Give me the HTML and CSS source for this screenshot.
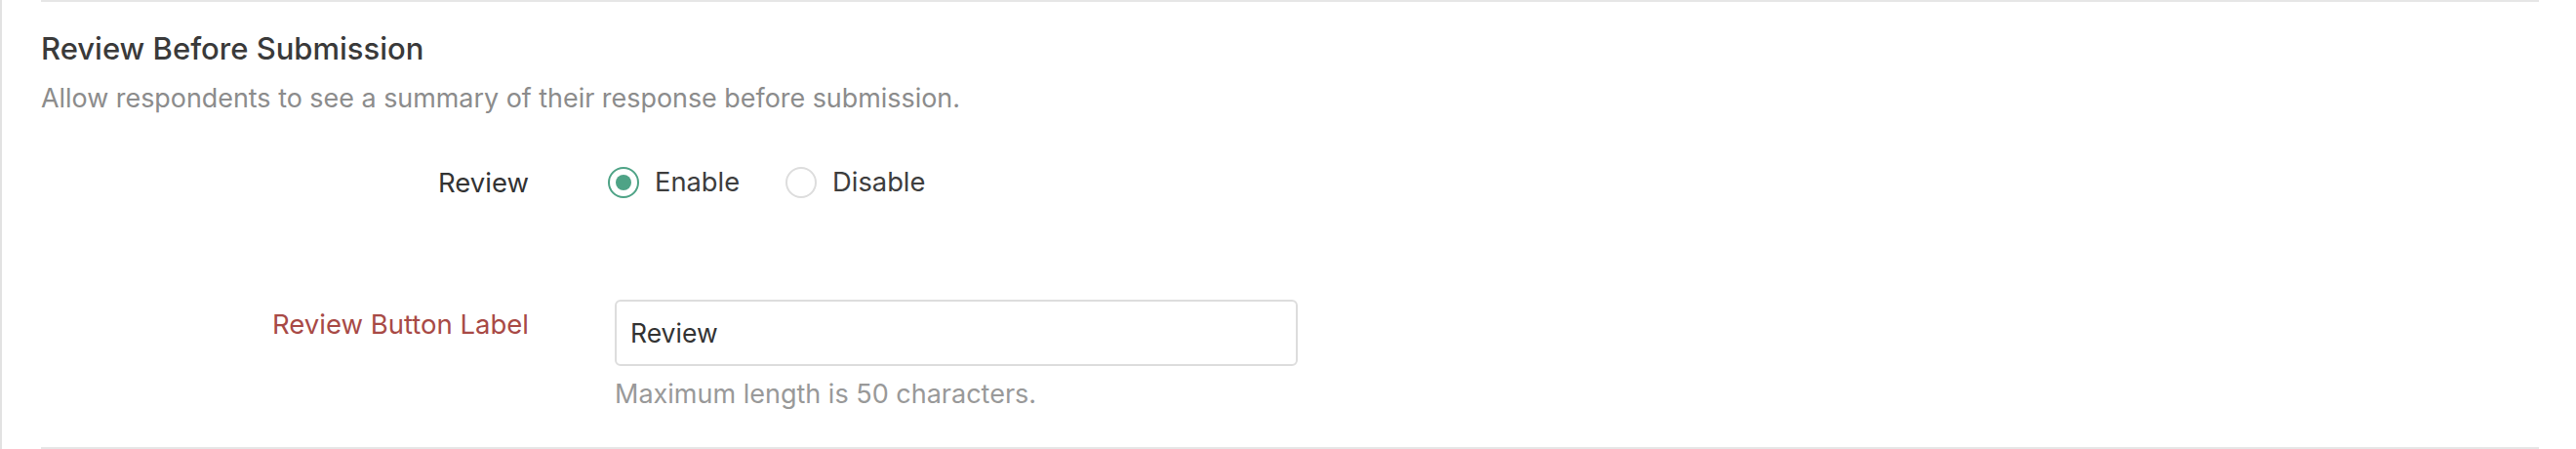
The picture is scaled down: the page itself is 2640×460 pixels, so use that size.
FILE: index.html
```html
<!DOCTYPE html>
<html lang="en">
<head>
<meta charset="utf-8">
<title>Review Before Submission</title>
<link rel="stylesheet" href="styles.css">
</head>
<body>
<div class="page">
  <section class="section">
    <h2 class="title">Review Before Submission</h2>
    <p class="desc">Allow respondents to see a summary of their response before submission.</p>
    <div class="form">
      <div class="row row-radio">
        <div class="label">Review</div>
        <div class="control">
          <div class="radios">
            <label class="radio"><span class="dot checked"></span><span class="rtext">Enable</span></label>
            <label class="radio"><span class="dot"></span><span class="rtext">Disable</span></label>
          </div>
        </div>
      </div>
      <div class="row row-input">
        <div class="label label-req">Review Button Label</div>
        <div class="control">
          <div class="input">Review</div>
          <div class="hint">Maximum length is 50 characters.</div>
        </div>
      </div>
    </div>
  </section>
</div>
</body>
</html>
```

FILE: styles.css
```css
html, body {
  margin: 0;
  padding: 0;
  background: #ffffff;
}
body {
  font-family: Inter, "Noto Sans", "Liberation Sans", sans-serif;
  color: #333333;
}
.page {
  height: 460px;
  border-left: 2px solid #e2e2e2;
  box-sizing: border-box;
  padding-left: 40px;
  padding-right: 38px;
}
.section {
  height: 460px;
  box-sizing: border-box;
  border-top: 2px solid #e6e6e6;
  border-bottom: 2px solid #e6e6e6;
  padding-top: 29px;
}
.title {
  margin: 0;
  font-size: 31px;
  line-height: 38px;
  font-weight: 500;
  color: #3a3a3a;
}
.desc {
  margin: 14px 0 0 0;
  font-size: 26.9px;
  line-height: 34px;
  color: #8c8c8c;
}
.form {
  margin-top: 54px;
  display: flex;
  flex-direction: column;
  gap: 104px;
}
.row {
  display: grid;
  grid-template-columns: 500px 700px;
  column-gap: 88px;
}
.label {
  text-align: right;
  font-size: 27.5px;
  line-height: 32px;
  color: #333333;
}
.label-req {
  color: #a84a46;
  padding-top: 9px;
}
.radios {
  display: flex;
  align-items: center;
  gap: 47px;
  margin-left: -7px;
}
.radio {
  display: flex;
  align-items: center;
  gap: 16px;
  font-size: 27.3px;
  line-height: 32px;
  color: #3d3d3d;
}
.dot {
  width: 32px;
  height: 32px;
  box-sizing: border-box;
  border: 2px solid #dddddd;
  border-radius: 50%;
  display: flex;
  align-items: center;
  justify-content: center;
}
.dot.checked {
  border-color: #4ea386;
}
.dot.checked::after {
  content: "";
  width: 16px;
  height: 16px;
  border-radius: 50%;
  background: #4ea386;
}
.input {
  height: 68px;
  box-sizing: border-box;
  border: 2px solid #dddddd;
  border-radius: 6px;
  padding: 0 14px;
  display: flex;
  align-items: center;
  font-size: 26.5px;
  color: #333333;
}
.hint {
  margin-top: 12px;
  font-size: 27px;
  line-height: 34px;
  color: #999999;
}
```
